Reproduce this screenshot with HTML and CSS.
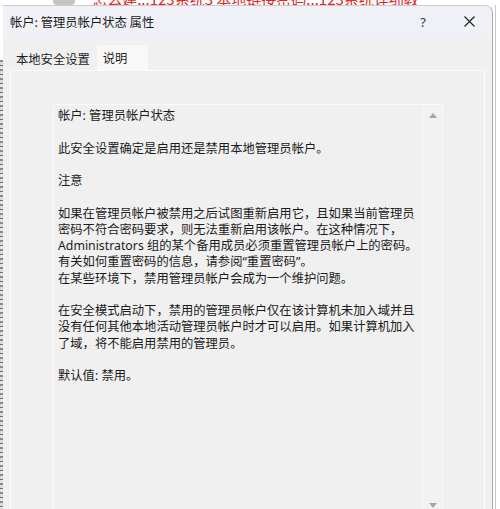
FILE: index.html
```html
<!DOCTYPE html>
<html lang="zh-CN">
  <head>
    <title>帐户: 管理员帐户状态 属性</title>
    <meta name="viewport" content="width=device-width, initial-scale=1">
    <link rel="stylesheet" href="styles.css">
  </head>
  <body>
    <div class="page-strip">
      <span class="page-icon"></span>
      <span class="page-title">怎么建...123系统3 本地链接密码...123系统详细教</span>
    </div>
    <div class="stage">
      <div class="edge-left"></div>
      <div class="dialog">
        <div class="title-bar">
          <span class="title-text">帐户: 管理员帐户状态 属性</span>
          <span class="help-button">?</span>
          <span class="close-button">
            <svg width="11" height="11" viewBox="0 0 11 11">
              <path d="M0.5 0.5 L10.5 10.5 M10.5 0.5 L0.5 10.5" stroke="#1c1c1c" stroke-width="1.1" fill="none"/>
            </svg>
          </span>
        </div>
        <div class="tabs">
          <div class="tab">本地安全设置</div>
          <div class="tab active">说明</div>
        </div>
        <div class="tab-panel">
          <div class="text-box">
            <div class="text-content">
              <p>帐户: 管理员帐户状态</p>
              <p>此安全设置确定是启用还是禁用本地管理员帐户。</p>
              <p>注意</p>
              <p>如果在管理员帐户被禁用之后试图重新启用它，且如果当前管理员<br>密码不符合密码要求，则无法重新启用该帐户。在这种情况下，<br>Administrators 组的某个备用成员必须重置管理员帐户上的密码。<br>有关如何重置密码的信息，请参阅“重置密码”。<br>在某些环境下，禁用管理员帐户会成为一个维护问题。</p>
              <p>在安全模式启动下，禁用的管理员帐户仅在该计算机未加入域并且<br>没有任何其他本地活动管理员帐户时才可以启用。如果计算机加入<br>了域，将不能启用禁用的管理员。</p>
              <p>默认值: 禁用。</p>
            </div>
            <div class="scrollbar">
              <span class="arrow-up"></span>
              <span class="arrow-down"></span>
            </div>
          </div>
        </div>
      </div>
      <div class="edge-right">
        <div class="edge-line"></div>
      </div>
    </div>
  </body>
</html>
```

FILE: styles.css
```css
body {
  margin: 0;
  padding: 0;
  width: 500px;
  height: 509px;
  overflow: hidden;
  background-color: #ffffff;
  font-family: "Noto Sans", "Noto Sans CJK SC", sans-serif;
  color: #1e1e1e;
}
.page-strip {
  height: 5px;
  overflow: hidden;
  white-space: nowrap;
}
.page-icon {
  display: inline-block;
  vertical-align: top;
  width: 22px;
  height: 14px;
  margin: -9px 0 0 53px;
  border-radius: 4px;
  background-color: #c4c4c4;
}
.page-title {
  display: inline-block;
  vertical-align: top;
  margin: -9px 0 0 13px;
  font-family: "Noto Sans CJK SC", sans-serif;
  font-size: 15px;
  line-height: 15px;
  color: #e0261e;
}
.stage {
  display: flex;
  height: 504px;
  overflow: hidden;
}
.edge-left {
  width: 3px;
  margin-top: 55px;
  background: repeating-linear-gradient(#8a8a8a 0 2px, #d9d9d9 2px 5px, #6f6f6f 5px 6px, #e3e3e3 6px 9px);
}
.dialog {
  width: 489px;
  border-top: 1px solid #c9cbd0;
  border-right: 1px solid #a9abae;
  border-top-right-radius: 8px;
  background-color: #f0f0f0;
  display: flex;
  flex-direction: column;
  overflow: hidden;
}
.title-bar {
  height: 31px;
  flex-shrink: 0;
  display: flex;
  align-items: center;
  background-color: #eff1f7;
}
.title-text {
  margin-left: 7px;
  font-family: "Noto Sans CJK SC", sans-serif;
  font-size: 12.3px;
  color: #1a1a1a;
  flex: 1;
}
.help-button {
  font-size: 13px;
  color: #3a3a3a;
  margin-right: 38px;
}
.close-button {
  display: flex;
  margin-right: 17px;
}
.tabs {
  display: flex;
  flex-shrink: 0;
  margin: 8px 0 0 7px;
  height: 25px;
}
.tab {
  font-family: "Noto Sans CJK SC", sans-serif;
  font-size: 12.3px;
  line-height: 25px;
  padding: 0 6px;
  margin-top: 2px;
}
.tab.active {
  background-color: #f8f8f8;
  margin-top: 0;
  margin-left: 1px;
  width: 39px;
  line-height: 27px;
}
.tab-panel {
  flex: 1;
  min-height: 0;
  margin: 0 7px;
  border-top: 1px solid #fbfbfb;
  border-left: 1px solid #fbfbfb;
  border-right: 1px solid #fbfbfb;
  background-color: #f0f0f0;
  padding: 33px 41px 0 42px;
  display: flex;
}
.text-box {
  flex: 1;
  border-top: 1px solid #fafafa;
  border-left: 1px solid #fafafa;
  border-right: 1px solid #fafafa;
  display: flex;
  background-color: #f0f0f0;
}
.text-content {
  flex: 1;
  padding: 3px 0 0 4px;
  font-family: "Noto Sans", "Noto Sans CJK SC", sans-serif;
  font-size: 12.3px;
  line-height: 16.25px;
  color: #1b1b1b;
}
.text-content p {
  margin: 0 0 16.25px 0;
}
.scrollbar {
  width: 19px;
  border-left: 1px solid #f7f7f7;
  background-color: #f2f2f2;
  display: flex;
  flex-direction: column;
  justify-content: space-between;
  align-items: center;
  padding: 8px 0 1px 0;
}
.arrow-up, .arrow-down {
  width: 0;
  height: 0;
  border-left: 4px solid transparent;
  border-right: 4px solid transparent;
}
.arrow-up {
  border-bottom: 5px solid #a6a6a6;
}
.arrow-down {
  border-top: 5px solid #a6a6a6;
}
.edge-right {
  flex: 1;
  background-color: #ffffff;
  display: flex;
}
.edge-line {
  width: 1px;
  margin-left: 2px;
  background-color: #c8c8c8;
}
```
